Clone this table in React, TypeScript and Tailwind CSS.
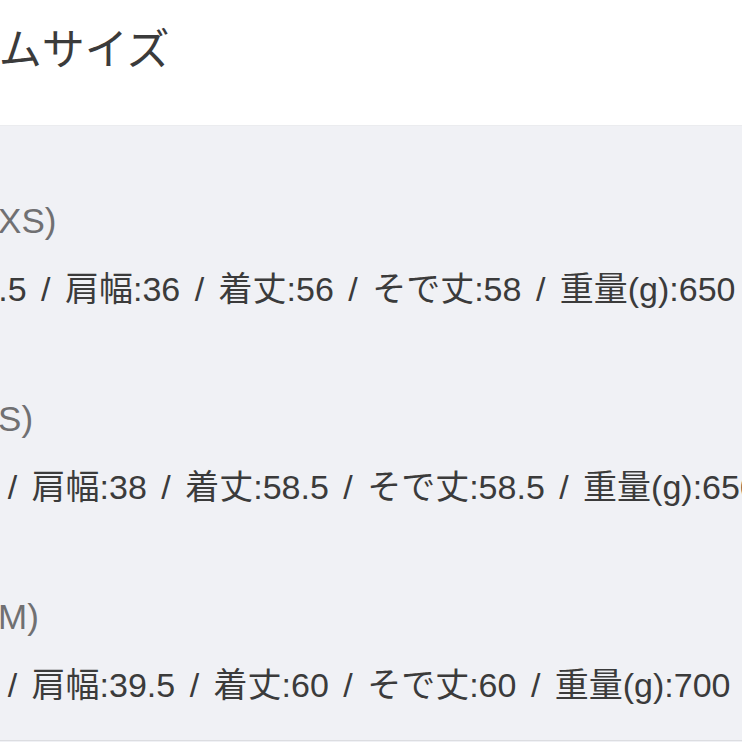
const sizes = [
  { label: 'サイズ1(XS)', detail: '身幅:44.5 / 肩幅:36 / 着丈:56 / そで丈:58 / 重量(g):650', shift: 'ml-[-117px]' },
  { label: 'サイズ2(S)', detail: '身幅:47 / 肩幅:38 / 着丈:58.5 / そで丈:58.5 / 重量(g):650', shift: 'ml-[-122px]' },
  { label: 'サイズ3(M)', detail: '身幅:49 / 肩幅:39.5 / 着丈:60 / そで丈:60 / 重量(g):700', shift: 'ml-[-122px]' },
]

export default function App() {
  return (
    <div
      className="w-[742px] h-[742px] overflow-hidden bg-[#f0f1f5] text-[#3b3b3b]"
      style={{ fontFamily: '"Liberation Sans", "Noto Sans CJK JP", sans-serif' }}
    >
      <div className="h-[126px] bg-white pt-[24px] border-b border-[#ebecef]">
        <div className="ml-[-126px] whitespace-nowrap text-[43px] leading-[52px]">アイテムサイズ</div>
      </div>

      <div className="pt-[71px] flex flex-col gap-[82px] border-b border-[#dcdde1] h-[615px]">
        {sizes.map((s) => (
          <div key={s.label} className="flex flex-col gap-[20px]">
            <div className="ml-[-137px] whitespace-nowrap text-[35px] leading-[48px] text-[#707072]">{s.label}</div>
            <div className={`${s.shift} whitespace-nowrap text-[34px] leading-[48px] [word-spacing:5px]`}>{s.detail}</div>
          </div>
        ))}
      </div>
    </div>
  )
}
